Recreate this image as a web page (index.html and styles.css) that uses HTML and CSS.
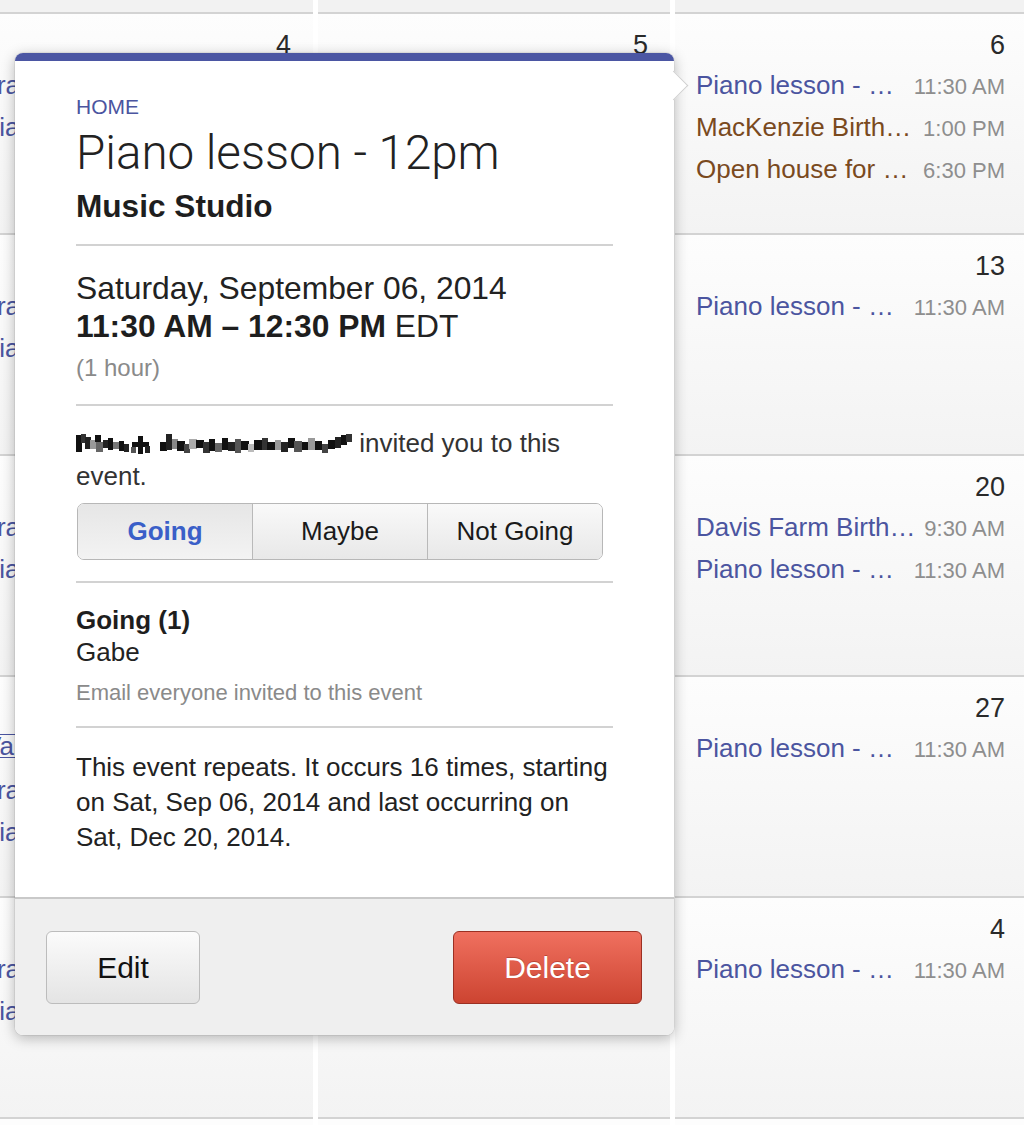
FILE: index.html
```html
<!DOCTYPE html>
<html>
<head>
<meta charset="utf-8">
<link rel="stylesheet" href="styles.css">
</head>
<body>
<div class="calendar">
  <div class="cell stub"></div><div class="cell stub"></div><div class="cell stub"></div>

  <div class="cell"><div class="day">4</div>
    <div class="ev"><span class="ev-title">Tra…</span><span class="ev-time">9:00 AM</span></div>
    <div class="ev"><span class="ev-title">Piano lesson - …</span><span class="ev-time">11:30 AM</span></div>
  </div>
  <div class="cell"><div class="day">5</div></div>
  <div class="cell"><div class="day">6</div>
    <div class="ev"><span class="ev-title">Piano lesson - …</span><span class="ev-time">11:30 AM</span></div>
    <div class="ev brown"><span class="ev-title">MacKenzie Birth…</span><span class="ev-time">1:00 PM</span></div>
    <div class="ev brown"><span class="ev-title">Open house for …</span><span class="ev-time">6:30 PM</span></div>
  </div>

  <div class="cell"><div class="day">11</div>
    <div class="ev"><span class="ev-title">Tra…</span><span class="ev-time">9:00 AM</span></div>
    <div class="ev"><span class="ev-title">Piano lesson - …</span><span class="ev-time">11:30 AM</span></div>
  </div>
  <div class="cell"><div class="day">12</div></div>
  <div class="cell"><div class="day">13</div>
    <div class="ev"><span class="ev-title">Piano lesson - …</span><span class="ev-time">11:30 AM</span></div>
  </div>

  <div class="cell"><div class="day">18</div>
    <div class="ev"><span class="ev-title">Tra…</span><span class="ev-time">9:00 AM</span></div>
    <div class="ev"><span class="ev-title">Piano lesson - …</span><span class="ev-time">11:30 AM</span></div>
  </div>
  <div class="cell"><div class="day">19</div></div>
  <div class="cell"><div class="day">20</div>
    <div class="ev"><span class="ev-title">Davis Farm Birth…</span><span class="ev-time">9:30 AM</span></div>
    <div class="ev"><span class="ev-title">Piano lesson - …</span><span class="ev-time">11:30 AM</span></div>
  </div>

  <div class="cell"><div class="day">25</div>
    <div class="ev"><span class="ev-title boxed">Val</span><span class="ev-time">8:00 AM</span></div>
    <div class="ev"><span class="ev-title">Tra…</span><span class="ev-time">9:00 AM</span></div>
    <div class="ev"><span class="ev-title">Piano lesson - …</span><span class="ev-time">11:30 AM</span></div>
  </div>
  <div class="cell"><div class="day">26</div></div>
  <div class="cell"><div class="day">27</div>
    <div class="ev"><span class="ev-title">Piano lesson - …</span><span class="ev-time">11:30 AM</span></div>
  </div>

  <div class="cell"><div class="day">2</div>
    <div class="ev"><span class="ev-title">Tra…</span><span class="ev-time">9:00 AM</span></div>
    <div class="ev"><span class="ev-title">Piano lesson - …</span><span class="ev-time">11:30 AM</span></div>
  </div>
  <div class="cell"><div class="day">3</div></div>
  <div class="cell"><div class="day">4</div>
    <div class="ev"><span class="ev-title">Piano lesson - …</span><span class="ev-time">11:30 AM</span></div>
  </div>

  <div class="cell stub-end"></div><div class="cell stub-end"></div><div class="cell stub-end"></div>
</div>

<div class="popover">
  <div class="pop-bar"></div>
  <div class="pop-arrow"></div>
  <div class="pop-body">
    <div class="cal-name">HOME</div>
    <h1 class="pop-title">Piano lesson - 12pm</h1>
    <div class="pop-location">Music Studio</div>

    <div class="section when">
      <div class="date">Saturday, September 06, 2014</div>
      <div class="time"><b>11:30 AM – 12:30 PM</b> EDT</div>
      <div class="duration">(1 hour)</div>
    </div>

    <div class="section invite">
      <p class="invite-text"><svg class="redacted" width="276" height="24" viewBox="0 0 276 24" aria-hidden="true">
        <rect x="0" y="3" width="6" height="17" fill="#111"/><rect x="5" y="2" width="5" height="9" fill="#333"/>
        <rect x="9" y="5" width="6" height="12" fill="#222"/><rect x="14" y="8" width="6" height="9" fill="#999"/>
        <rect x="19" y="3" width="6" height="7" fill="#111"/><rect x="20" y="10" width="7" height="10" fill="#666"/>
        <rect x="27" y="8" width="6" height="8" fill="#222"/><rect x="32" y="6" width="5" height="12" fill="#111"/>
        <rect x="37" y="10" width="6" height="7" fill="#777"/><rect x="43" y="9" width="5" height="10" fill="#111"/>
        <rect x="48" y="12" width="5" height="8" fill="#222"/>
        <rect x="56" y="10" width="17" height="5" fill="#111"/><rect x="62" y="4" width="5" height="18" fill="#111"/>
        <rect x="55" y="15" width="5" height="6" fill="#555"/><rect x="69" y="14" width="5" height="7" fill="#222"/>
        <rect x="84" y="10" width="7" height="9" fill="#111"/><rect x="90" y="2" width="6" height="16" fill="#222"/>
        <rect x="96" y="7" width="6" height="10" fill="#888"/><rect x="101" y="9" width="8" height="10" fill="#111"/>
        <rect x="108" y="12" width="6" height="9" fill="#444"/><rect x="113" y="7" width="8" height="10" fill="#aaa"/>
        <rect x="120" y="8" width="8" height="8" fill="#111"/><rect x="127" y="10" width="7" height="11" fill="#333"/>
        <rect x="133" y="7" width="6" height="12" fill="#111"/><rect x="139" y="11" width="7" height="9" fill="#666"/>
        <rect x="146" y="6" width="6" height="12" fill="#111"/><rect x="152" y="10" width="7" height="9" fill="#222"/>
        <rect x="159" y="7" width="6" height="14" fill="#555"/><rect x="165" y="9" width="8" height="9" fill="#111"/>
        <rect x="172" y="12" width="6" height="8" fill="#bbb"/><rect x="178" y="8" width="8" height="10" fill="#111"/>
        <rect x="186" y="6" width="6" height="12" fill="#333"/><rect x="191" y="10" width="8" height="8" fill="#111"/>
        <rect x="199" y="8" width="6" height="10" fill="#999"/><rect x="205" y="10" width="7" height="10" fill="#222"/>
        <rect x="212" y="6" width="7" height="10" fill="#111"/><rect x="218" y="9" width="8" height="11" fill="#555"/>
        <rect x="226" y="10" width="6" height="8" fill="#111"/><rect x="232" y="6" width="7" height="12" fill="#999"/>
        <rect x="239" y="9" width="7" height="9" fill="#111"/><rect x="246" y="12" width="6" height="9" fill="#444"/>
        <rect x="252" y="8" width="7" height="9" fill="#111"/><rect x="259" y="5" width="6" height="11" fill="#222"/>
        <rect x="265" y="3" width="6" height="10" fill="#111"/><rect x="270" y="2" width="6" height="8" fill="#333"/>
      </svg> invited you to this event.</p>
      <div class="rsvp">
        <span class="seg active">Going</span>
        <span class="seg">Maybe</span>
        <span class="seg">Not Going</span>
      </div>
    </div>

    <div class="section attendees">
      <div class="att-head">Going (1)</div>
      <div class="att-name">Gabe</div>
      <div class="att-email">Email everyone invited to this event</div>
    </div>

    <div class="section repeat">
      <p>This event repeats. It occurs 16 times, starting on Sat, Sep 06, 2014 and last occurring on Sat, Dec 20, 2014.</p>
    </div>
  </div>
  <div class="pop-footer">
    <button class="btn btn-edit">Edit</button>
    <button class="btn btn-delete">Delete</button>
  </div>
</div>
</body>
</html>
```
FILE: styles.css
```css
* { box-sizing: border-box; }
html, body {
  margin: 0;
  padding: 0;
}
body {
  width: 1024px;
  height: 1125px;
  overflow: hidden;
  position: relative;
  background: #fff;
  font-family: "Liberation Sans", Arial, sans-serif;
  color: #222;
}

/* calendar background */
.calendar {
  display: grid;
  grid-template-columns: repeat(3, 352px);
  grid-template-rows: 14px repeat(5, 221px) 20px;
  column-gap: 5px;
  margin-left: -39px;
}
.cell {
  border-bottom: 2px solid #d3d3d3;
  background: linear-gradient(#fdfdfd, #f3f3f3);
  padding: 15px 22px 0 21px;
  overflow: hidden;
}
.cell.stub { background: #f2f2f2; padding: 0; }
.cell.stub-end { background: #fdfdfd; padding: 0; border-bottom: none; }
.day {
  text-align: right;
  font-size: 27px;
  line-height: 32px;
  color: #2a2a2a;
  margin-bottom: 3px;
}
.ev {
  display: flex;
  justify-content: space-between;
  align-items: baseline;
  height: 42px;
  line-height: 42px;
  white-space: nowrap;
  color: #4b55a0;
}
.ev.brown { color: #7a4a1e; }
.ev-title { font-size: 26px; }
.ev-title.boxed {
  border: 1.5px solid #4b55a0;
  line-height: 22px;
  padding: 0 1px;
}
.ev-time { font-size: 22px; color: #8e8e8e; }

/* popover */
.popover {
  position: absolute;
  left: 15px;
  top: 53px;
  width: 659px;
  background: #fff;
  border-radius: 8px;
  box-shadow: 0 3px 14px rgba(0, 0, 0, 0.28), 0 0 0 1px rgba(0, 0, 0, 0.06);
}
.pop-bar {
  height: 8px;
  background: #4b56a3;
  border-radius: 8px 8px 0 0;
}
.pop-arrow {
  position: absolute;
  left: 648px;
  top: 22px;
  width: 21px;
  height: 21px;
  background: #fff;
  border-top: 1px solid #cfcfcf;
  border-right: 1px solid #cfcfcf;
  transform: rotate(45deg);
}
.pop-body {
  padding: 33px 61px 42px;
}
.cal-name {
  font-size: 21px;
  line-height: 25px;
  color: #4b55a0;
}
.pop-title {
  margin: 8px 0 0;
  font-family: Roboto, "Liberation Sans", sans-serif;
  font-weight: 300;
  font-size: 47.5px;
  line-height: 52px;
  color: #222;
}
.pop-location {
  margin-top: 8px;
  font-size: 31.6px;
  line-height: 38px;
  font-weight: bold;
  color: #1e1e1e;
}
.section {
  border-top: 2px solid #d2d2d2;
}
.when { margin-top: 19px; padding-top: 23px; }
.date { font-size: 31.8px; line-height: 38px; }
.time { font-size: 31.8px; line-height: 39px; }
.time b { font-weight: bold; color: #1e1e1e; }
.duration { margin-top: 7px; font-size: 24px; line-height: 30px; color: #8a8a8a; }

.invite { margin-top: 21px; padding-top: 21px; }
.invite-text {
  margin: 0;
  font-size: 26px;
  line-height: 33px;
  color: #333;
}
.redacted { vertical-align: -4px; }
.rsvp {
  margin-top: 10px;
  margin-left: 1px;
  width: 526px;
  height: 57px;
  display: flex;
  border: 1.5px solid #b7b7b7;
  border-radius: 7px;
  overflow: hidden;
}
.seg {
  flex: 1;
  display: flex;
  align-items: center;
  justify-content: center;
  font-size: 26px;
  color: #1a1a1a;
  background: linear-gradient(#f9f9f9, #e8e8e8);
  border-left: 1px solid #b9b9b9;
}
.seg:first-child { border-left: none; }
.seg.active {
  font-weight: bold;
  color: #3a5fc8;
  background: linear-gradient(#e6e6e6, #f3f3f3);
}

.attendees { margin-top: 21px; padding-top: 21px; }
.att-head { font-size: 26px; line-height: 32px; font-weight: bold; color: #1e1e1e; }
.att-name { font-size: 26px; line-height: 32px; color: #222; }
.att-email { margin-top: 11px; font-size: 22px; line-height: 28px; color: #8a8a8a; }

.repeat { margin-top: 19px; padding-top: 22px; }
.repeat p {
  margin: 0;
  font-size: 26px;
  line-height: 35px;
  color: #222;
}

.pop-footer {
  display: flex;
  justify-content: space-between;
  padding: 32px 32px 31px 31px;
  background: #efefef;
  border-top: 2px solid #c9c9c9;
  border-radius: 0 0 8px 8px;
}
.btn {
  height: 73px;
  border-radius: 6px;
  font-family: "Liberation Sans", Arial, sans-serif;
  font-size: 30px;
  cursor: pointer;
}
.btn-edit {
  width: 154px;
  color: #111;
  background: linear-gradient(#fbfbfb, #e4e4e4);
  border: 1.5px solid #bcbcbc;
}
.btn-delete {
  width: 189px;
  color: #fff;
  background: linear-gradient(#f0705f, #cc4431);
  border: 1.5px solid #9b3023;
  text-shadow: 0 -1px 0 rgba(120, 30, 20, 0.4);
}
```
